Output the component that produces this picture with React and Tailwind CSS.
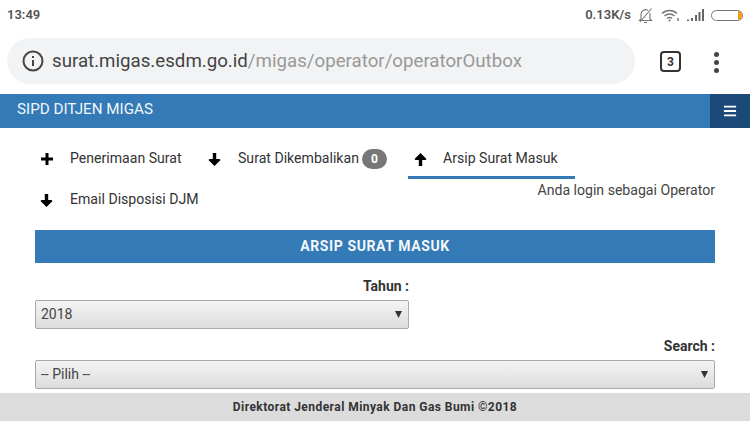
import React from "react";
import { FaBars } from "react-icons/fa";

const Plus = () => (
  <svg width="12" height="12" viewBox="0 0 12 12"><path d="M4.500 0h3v4.500H12v3H7.500V12h-3V7.500H0v-3h4.500z" fill="#000" /></svg>
);
const Down = () => (
  <svg width="13" height="13" viewBox="0 0 13 13"><path d="M4.800 0h3.400v6H11.500l1 1L6.500 13L.5 7l1-1h3.300z" fill="#000" /></svg>
);
const Up = () => (
  <svg width="13" height="13" viewBox="0 0 13 13"><path d="M4.800 13h3.400V7H11.500l1-1L6.500 0L.5 6l1 1h3.300z" fill="#000" /></svg>
);

function Tab({ icon, label, badge, active, className }) {
  return (
    <div className={`flex h-[41px] items-center pt-[1px] ${className} ${active ? "relative" : ""}`}>
      <span className="flex w-[13px] justify-center">{icon}</span>
      <span className="text-[14.100px] text-[#333]">{label}</span>
      {badge && (
        <span className="ml-[3px] flex h-[20px] w-[25px] items-center justify-center rounded-full bg-[#777] text-[12px] font-bold text-white">
          {badge}
        </span>
      )}
      {active && <span className="absolute bottom-0 left-0 h-[3px] w-full bg-[#337ab7]" />}
    </div>
  );
}

function Select({ label, className }) {
  return (
    <div className={`flex h-[29px] items-center justify-between rounded-[2px] border border-[#a9a9a9] bg-gradient-to-b from-[#f4f4f4] to-[#dcdcdc] pl-[5px] pr-[6px] text-[14px] text-[#444] [font-variant-ligatures:none] ${className}`}>
      <span>{label}</span>
      <svg width="7" height="7" viewBox="0 0 7 7"><path d="M0 0h7L3.500 7z" fill="#333" /></svg>
    </div>
  );
}

export default function App() {
  return (
    <div className="relative flex h-[421px] w-[750px] flex-col overflow-hidden bg-white font-['Roboto',sans-serif]">
      <div className="flex h-[30px] shrink-0 items-center justify-between pl-[7px] pr-[7px] text-[13px] font-semibold text-[#555]">
        <span>13:49</span>
        <div className="flex items-center">
          <span>0.13K/s</span>
          <svg className="ml-[7px]" width="15" height="17" viewBox="0 0 15 17" fill="none" stroke="#777" strokeWidth="1.1">
            <path d="M3 12V7a4.500 4.500 0 0 1 7-3.600M12 6v6l1.500 1.500H1.500L3 12M6 15.500h3M13.500 1.500L2 15" />
          </svg>
          <svg className="ml-[8px]" width="19" height="13" viewBox="0 0 19 13" fill="none" stroke="#777" strokeWidth="1.5">
            <path d="M1 4.500a11 11 0 0 1 15 0M3.500 7a7.500 7.500 0 0 1 10 0M6 9.500a4 4 0 0 1 5 0" />
            <circle cx="8.500" cy="11.500" r="1" fill="#777" stroke="none" />
            <path d="M17 9v3" />
          </svg>
          <svg className="ml-[7px]" width="18" height="12" viewBox="0 0 18 12" fill="#666">
            <path d="M0 10.500h2V12H0zM4 9h2v3H4zM8 6h2v6H8zM11.500 3h2v9h-2zM15 0h2v12h-2z" />
          </svg>
          <div className="ml-[6px] flex h-[11px] w-[32px] justify-end overflow-hidden rounded-full border border-[#777]">
            <span className="h-full w-[4px] bg-[#f39c12]" />
          </div>
        </div>
      </div>

      <div className="flex h-[63px] shrink-0 items-start pl-[7px] pt-[8px]">
        <div className="flex h-[46px] w-[628px] items-center rounded-full bg-[#f1f3f4] pl-[15px] text-[18.700px]">
          <svg width="22" height="22" viewBox="0 0 22 22" fill="none" stroke="#444" strokeWidth="2">
            <circle cx="11" cy="11" r="9.500" />
            <path d="M11 10v6" />
            <path d="M11 6v2" />
          </svg>
          <span className="ml-[8px] text-[#444]">surat.migas.esdm.go.id</span>
          <span className="text-[#999]">/migas/operator/operatorOutbox</span>
        </div>
        <div className="ml-[25px] mt-[13px] flex h-[21px] w-[21px] items-center justify-center rounded-[4px] border-2 border-[#333] text-[12px] font-bold text-[#333]">
          3
        </div>
        <div className="ml-[33px] mt-[14px] flex flex-col gap-[3px]">
          <span className="h-[5px] w-[5px] rounded-full bg-[#444]" />
          <span className="h-[5px] w-[5px] rounded-full bg-[#444]" />
          <span className="h-[5px] w-[5px] rounded-full bg-[#444]" />
        </div>
      </div>

      <div className="mt-[1px] flex h-[34px] shrink-0 items-stretch justify-between bg-[#337ab7]">
        <span className="pl-[17px] pt-[5px] text-[15.200px] leading-[20px] text-[#f2f6fa]">SIPD DITJEN MIGAS</span>
        <div className="flex w-[40px] items-center justify-center bg-[#1b4a78] text-[14px] text-white">
          <FaBars />
        </div>
      </div>

      <div className="flex flex-col px-[35px] pt-[10px]">
        <div className="flex h-[42px] items-start">
          <Tab className="w-[168px] pl-[5px]" icon={<Plus />} label={<span className="ml-[17px]">Penerimaan Surat</span>} />
          <Tab className="w-[205px] pl-[5px]" icon={<Down />} label={<span className="ml-[17px]">Surat Dikembalikan</span>} badge="0" />
          <Tab active className="w-[167px] pl-[6px]" icon={<Up />} label={<span className="ml-[16px]">Arsip Surat Masuk</span>} />
        </div>
        <div className="flex h-[44px] items-start justify-between">
          <div className="flex h-[40px] items-center pl-[5px]">
            <span className="flex w-[13px] justify-center"><Down /></span>
            <span className="ml-[17px] text-[14.100px] text-[#333]">Email Disposisi DJM</span>
          </div>
          <span className="text-[14.100px] leading-[20px] text-[#444]">Anda login sebagai Operator</span>
        </div>
        <div className="mt-[6px] flex h-[33px] items-center justify-center bg-[#337ab7] text-[14px] font-bold tracking-[0.6px] text-[#f4f7fa]">
          ARSIP SURAT MASUK
        </div>
        <div className="mt-[14px] w-[374px] text-right text-[14px] font-bold leading-[18px] text-[#333]">Tahun :</div>
        <Select className="mt-[5px] w-[374px]" label="2018" />
        <div className="mt-[8px] text-right text-[14px] font-bold leading-[18px] text-[#333]">Search :</div>
        <Select className="mt-[5px]" label="-- Pilih --" />
      </div>

      <div className="absolute bottom-0 left-0 flex h-[28px] w-full items-center justify-center bg-[#dcdcdc] text-[12px] font-bold tracking-[0.450px] text-[#333]">
        Direktorat Jenderal Minyak Dan Gas Bumi ©2018
      </div>
    </div>
  );
}
